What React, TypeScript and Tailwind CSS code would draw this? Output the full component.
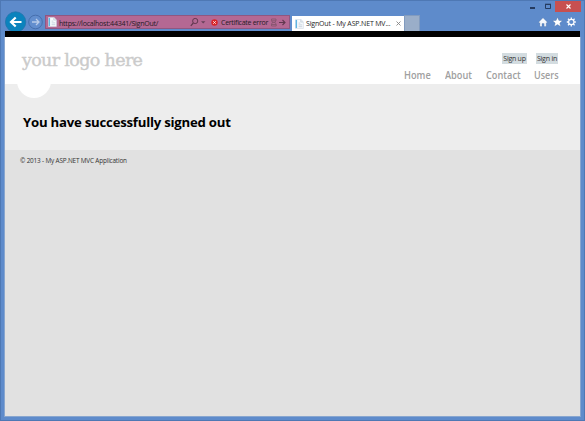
import React from 'react';

const uiFont = "font-['Open_Sans','Noto_Sans',sans-serif]";

function PageIcon() {
  return (
    <svg width="9" height="10" viewBox="0 0 10 11" className="block shrink-0">
      <path d="M.5.5h6.2l2.6 2.6v7.4H.5z" fill="#f7fafc" stroke="#d0dbe5" strokeWidth=".7" />
      <path d="M1.5 1v9" stroke="#5eb5e3" strokeWidth="1.6" />
      <path d="M6.5.7v2.6H9M4 4.5h2M4 6.5h4M4 8.5h4" stroke="#b7c5d2" strokeWidth=".8" fill="none" />
    </svg>
  );
}

function WindowControls() {
  return (
    <div className="flex h-[15px] items-start justify-end pr-1">
      <svg width="26" height="12" viewBox="0 0 26 12">
        <path d="M1 8h5" stroke="#253b60" strokeWidth="2" />
        <path d="M16.5 4.5h5v4h-5z" fill="none" stroke="#253b60" />
        <path d="M16 4.3h6" stroke="#253b60" strokeWidth="1.2" />
      </svg>
      <div className="flex h-3 w-[26px] items-center justify-center bg-[#c75050]">
        <svg width="5" height="5" viewBox="0 0 5 5" className="mt-px">
          <path d="M.5.5l4 4m0-4l-4 4" stroke="#fff" strokeWidth="1.1" />
        </svg>
      </div>
    </div>
  );
}

function NavButtons() {
  return (
    <svg width="39" height="22" viewBox="0 0 39 22" className="-mt-[4px] shrink-0">
      <circle cx="10.6" cy="11" r="10.2" fill="#0b83bd" stroke="#2475ad" strokeWidth=".8" />
      <path d="M16.5 11H6.3M10.7 6.5L6 11l4.7 4.5" fill="none" stroke="#fff" strokeWidth="2.2" />
      <circle cx="30.5" cy="11" r="6.8" fill="#628ece" stroke="#466fad" />
      <path d="M27 11h6.6M31 8l3 3-3 3" fill="none" stroke="#b8cbe9" strokeWidth="1.3" />
    </svg>
  );
}

function AddressBar() {
  return (
    <div className="flex h-[14px] w-[245px] shrink-0 items-center border border-[#8f5781] bg-[#b46893] text-[#271b26]">
      <div className="ml-[2px] flex"><PageIcon /></div>
      <span className="ml-[2px] w-[131px] shrink-0 whitespace-nowrap pt-px text-[7.1px] leading-[12px] tracking-[-0.26px]">https://localhost:44341/SignOut/</span>
      <svg width="16" height="10" viewBox="0 0 16 10" className="shrink-0">
        <circle cx="5.2" cy="4" r="2.6" fill="none" stroke="#62384f" />
        <path d="M3.3 6L.8 8.8" stroke="#62384f" strokeWidth="1.2" />
        <path d="M11 4.2h4.4L13.2 6.4z" fill="#68405a" />
      </svg>
      <svg width="7" height="7" viewBox="0 0 7 7" className="ml-[5px] shrink-0">
        <circle cx="3.5" cy="3.5" r="3.2" fill="#da2528" />
        <path d="M2.2 2.2l2.6 2.6m0-2.6L2.2 4.8" stroke="#fff" strokeWidth=".8" />
      </svg>
      <span className="ml-[3px] w-[48px] shrink-0 whitespace-nowrap pt-px text-[7px] leading-[12px] tracking-[-0.28px]">Certificate error</span>
      <svg width="18" height="9" viewBox="0 0 18 9" className="ml-px shrink-0">
        <path d="M1.5 1h4.5v1.5l-1 1.8 1.2 2V8H1.5V6.2l1-1.9-1-1.8zM1.5 2.8H6M2.5 4.5h2.5M1.5 6.5H6" fill="none" stroke="#815369" strokeWidth=".8" />
        <path d="M9 4.5h6M12.5 2L15 4.5 12.5 7" fill="none" stroke="#62384f" strokeWidth="1.1" />
      </svg>
    </div>
  );
}

function BrowserTools() {
  return (
    <svg width="40" height="12" viewBox="0 0 40 12" className="ml-auto mr-[7px] mt-px shrink-0">
      <path d="M.6 6.2L5 1.8l4.4 4.4-.8.8-.4-.3v3.9H6.1V7.6H4v3H1.9V6.7l-.5.3z" fill="#f5f8fc" stroke="#46699b" strokeWidth=".3" />
      <path d="M19.5 1.2l1.4 3.2 3.5.3-2.6 2.3.8 3.4-3.1-1.8-3.1 1.8.8-3.4-2.6-2.3 3.5-.3z" fill="#fff" stroke="#46699b" strokeWidth=".3" />
      <g transform="translate(33.3 6)" stroke="#fff" fill="none">
        <circle r="2.7" strokeWidth="1.2" />
        <path d="M0-4.5v1.6M0 4.5V2.9M-4.5 0h1.6M4.5 0H2.9M-3.3-3.3l1.2 1.2M3.3 3.3L2.1 2.1M-3.3 3.3l1.2-1.2M3.3-3.3L2.1-2.1" strokeWidth="1.3" />
      </g>
    </svg>
  );
}

function BrowserChrome() {
  return (
    <header className="h-[31px] shrink-0">
      <WindowControls />
      <div className="flex h-4 items-start pl-[5px]">
        <NavButtons />
        <div className="ml-[1px]"><AddressBar /></div>
        <div className="ml-[2px] mt-[1px] flex h-[15px] w-[112px] shrink-0 items-center bg-white pl-[3px] text-[#262626]">
          <PageIcon />
          <span className="ml-[2px] w-[90px] shrink-0 whitespace-nowrap text-[7px] leading-[12px] tracking-[-0.16px]">SignOut - My ASP.NET MV...</span>
          <svg width="5" height="5" viewBox="0 0 5 5" className="shrink-0"><path d="M.5.5l4 4m0-4l-4 4" stroke="#858585" strokeWidth=".9" /></svg>
        </div>
        <div className="h-4 w-4 shrink-0 border border-b-0 border-[#819bbf] bg-[#9aaec9]" />
        <BrowserTools />
      </div>
    </header>
  );
}

export default function App() {
  return (
    <div className={`relative flex h-[421px] w-[585px] flex-col overflow-hidden bg-[#5e8bcb] ${uiFont}`}>
      <BrowserChrome />
      <main className="mx-[5px] flex h-[385px] flex-col border-t-[6px] border-black bg-[#e1e1e1]">
        <div className="flex h-[47px] shrink-0 justify-between bg-white pl-[17px] pr-[22px]">
          <h1 className="mt-[10px] whitespace-nowrap font-['DejaVu_Serif',serif] text-[17.5px] leading-[26px] tracking-[-0.65px] text-[#cbcbcb] [-webkit-text-stroke:0.4px_#cbcbcb]">your logo here</h1>
          <div>
            <div className="mt-[16px] flex justify-end gap-[9px] text-[7px] leading-[11px] text-[#333]">
              <a className="w-[25px] whitespace-nowrap bg-[#d3dce0] text-center tracking-[-0.25px]">Sign up</a>
              <a className="w-[22px] whitespace-nowrap bg-[#d3dce0] text-center tracking-[-0.2px]">Sign in</a>
            </div>
            <nav className="mt-[3px] flex gap-[14px] text-[11px] font-semibold leading-[15px] text-[#a0a0a0]">
              <a className="w-[27px] origin-left scale-x-[0.84]">Home</a>
              <a className="w-[27px] origin-left scale-x-[0.84]">About</a>
              <a className="w-[34px] origin-left scale-x-[0.84]">Contact</a>
              <a className="w-[24px] origin-left scale-x-[0.82]">Users</a>
            </nav>
          </div>
        </div>
        <section className="h-[66px] shrink-0 bg-[#ededed] pl-[12px]">
          <div className="h-[14px] w-[34px] overflow-hidden"><div className="-mt-[20px] h-[34px] w-[34px] rounded-full bg-white" /></div>
          <h2 className="ml-[6px] mt-[15px] whitespace-nowrap text-[13.2px] font-bold leading-[19px] tracking-[-0.23px] text-black">You have successfully signed out</h2>
        </section>
        <footer className="pl-[15px] pt-[5px] text-[6.4px] leading-[11px] tracking-[-0.17px] text-[#333]">© 2013 - My ASP.NET MVC Application</footer>
      </main>
      <div className="pointer-events-none absolute inset-0 border border-[#4e78b4]" />
      <div className="pointer-events-none absolute bottom-[4px] left-[4px] right-[4px] top-[37px] border border-t-0 border-[#88a6cf]" />
    </div>
  );
}
